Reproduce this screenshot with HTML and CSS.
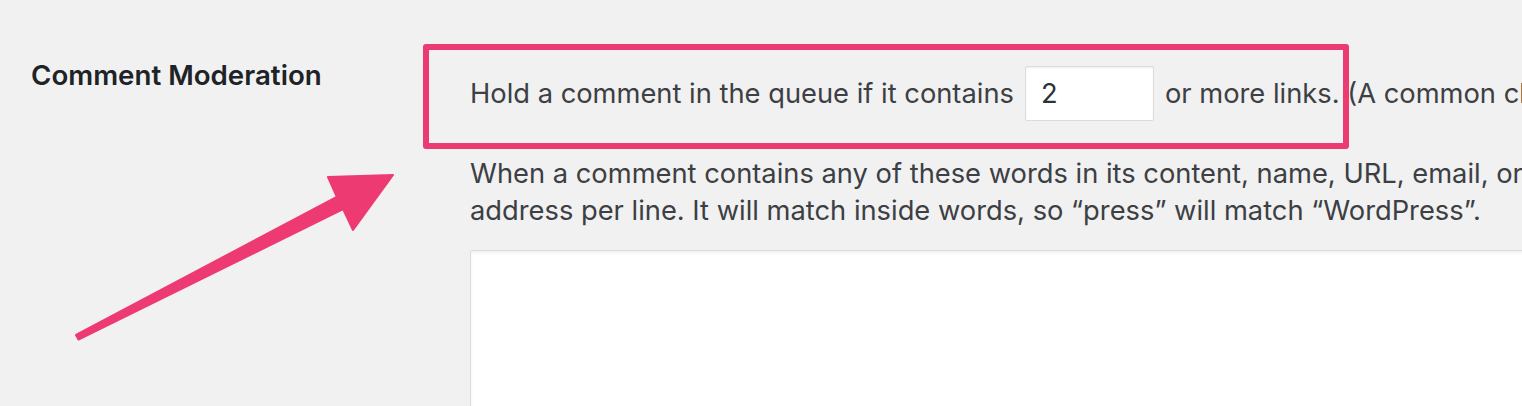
FILE: index.html
```html
<!DOCTYPE html>
<html lang="en">
<head>
<meta charset="utf-8">
<title>Comment Moderation</title>
<link rel="stylesheet" href="styles.css">
</head>
<body>
<div class="row">
  <div class="label">Comment Moderation</div>
  <div class="field">
    <div class="line1">
      <span>Hold a comment in the queue if it contains</span>
      <input class="num" type="text" value="2">
      <span>or more links. (A common characteristic of comment spam is a large number of hyperlinks.)</span>
    </div>
    <p class="desc">When a comment contains any of these words in its content, name, URL, email, or IP, it will be held in the moderation queue. One word or IP<br>address per line. It will match inside words, so “press” will match “WordPress”.</p>
    <textarea class="words"></textarea>
  </div>
</div>
<div class="highlight"></div>
<svg class="arrow" width="420" height="360" viewBox="0 0 420 360">
  <polygon points="76,335 336.8,196.8 328,177 393,175 353,230 343.2,209.2 78.5,339.5" fill="#ee3a72" stroke="#ee3a72" stroke-width="2" stroke-linejoin="round"/>
</svg>
</body>
</html>
```
FILE: styles.css
```css
html, body {
  margin: 0;
  padding: 0;
  background: #f1f1f1;
  overflow: hidden;
  width: 1522px;
  height: 406px;
}
body {
  font-family: Inter, "Noto Sans", sans-serif;
  color: #3c3f44;
  position: relative;
}
.row {
  display: flex;
  padding-top: 66px;
}
.label {
  flex: 0 0 470px;
  box-sizing: border-box;
  padding-left: 31px;
  margin-top: -9px;
  font-size: 27.7px;
  font-weight: 600;
  line-height: 36px;
  color: #1d2327;
  white-space: nowrap;
}
.field {
  flex: 1;
  min-width: 0;
  font-size: 27.3px;
  line-height: 37px;
}
.line1 {
  display: flex;
  align-items: center;
  gap: 11px;
  white-space: nowrap;
}
.num {
  box-sizing: border-box;
  width: 129px;
  height: 55px;
  margin: 0;
  padding: 0 15px;
  border: 1px solid #dcdcde;
  border-radius: 2px;
  background: #fff;
  box-shadow: inset 0 1px 2px rgba(0,0,0,0.07);
  font: inherit;
  color: #2c3338;
}
.desc {
  margin: 34px 0 21px;
  white-space: nowrap;
}
.words {
  display: block;
  box-sizing: border-box;
  width: 1200px;
  height: 300px;
  margin: 0;
  border: 1px solid #dcdcde;
  border-radius: 2px;
  background: #fff;
  box-shadow: inset 0 2px 3px rgba(0,0,0,0.06);
  resize: none;
}
.highlight {
  position: absolute;
  left: 423px;
  top: 44px;
  width: 926px;
  height: 105px;
  box-sizing: border-box;
  border: 6px solid #ec3a72;
  border-radius: 3px;
}
.arrow {
  position: absolute;
  left: 0;
  top: 0;
}
```
